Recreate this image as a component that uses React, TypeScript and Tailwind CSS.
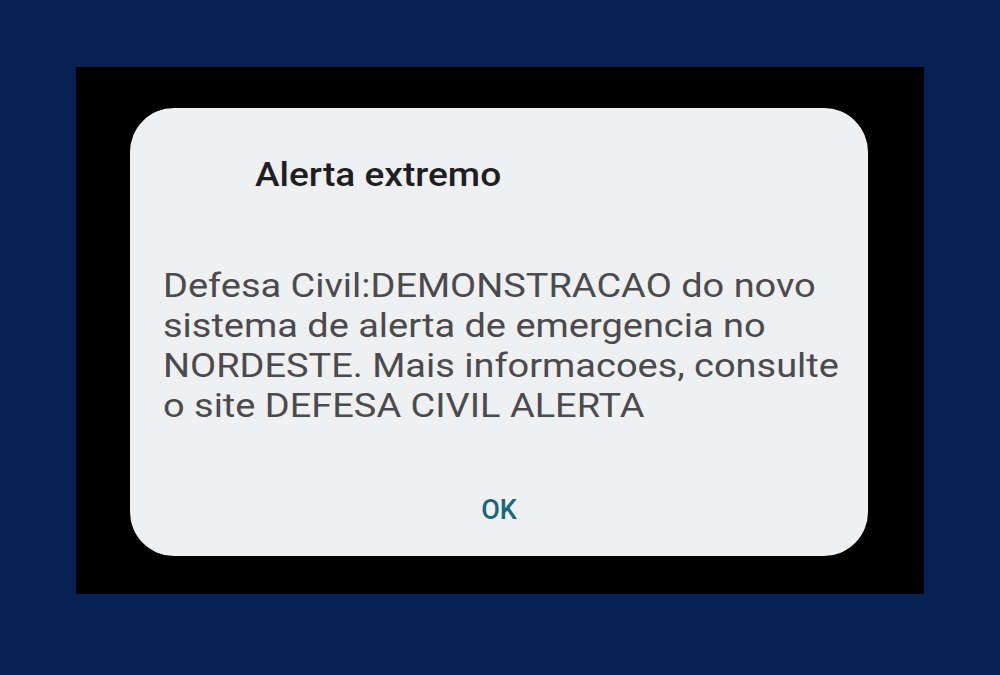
const lines = [
  'Defesa Civil:DEMONSTRACAO do novo',
  'sistema de alerta de emergencia no',
  'NORDESTE. Mais informacoes, consulte',
  'o site DEFESA CIVIL ALERTA',
];

export default function App() {
  return (
    <div className="flex h-[675px] w-[1000px] justify-center bg-[#062255] pt-[67px]" style={{ fontFamily: 'Roboto, "Noto Sans", sans-serif' }}>
      <div className="flex h-[527px] w-[848px] justify-center bg-black pt-[41px] pl-[54px] pr-[56px]">
        <div className="flex h-[448px] w-full flex-col rounded-[44px] bg-[#eff0f2]">
          <div className="pl-[125px] pt-[46px]">
            <h1 className="origin-left scale-x-[1.09] text-[34px] font-medium leading-[40px] text-[#1f1f21]">Alerta extremo</h1>
          </div>
          <div className="mt-[72px] pl-[33px]">
            <div className="origin-left scale-x-[1.15] text-[33px] leading-[40px] text-[#4b4b4d]">
              {lines.map((l) => (
                <div key={l} className="whitespace-nowrap">{l}</div>
              ))}
            </div>
          </div>
          <div className="mt-auto flex justify-center pb-[26px]">
            <button className="text-[27px] font-medium text-[#17687a]">OK</button>
          </div>
        </div>
      </div>
    </div>
  );
}
